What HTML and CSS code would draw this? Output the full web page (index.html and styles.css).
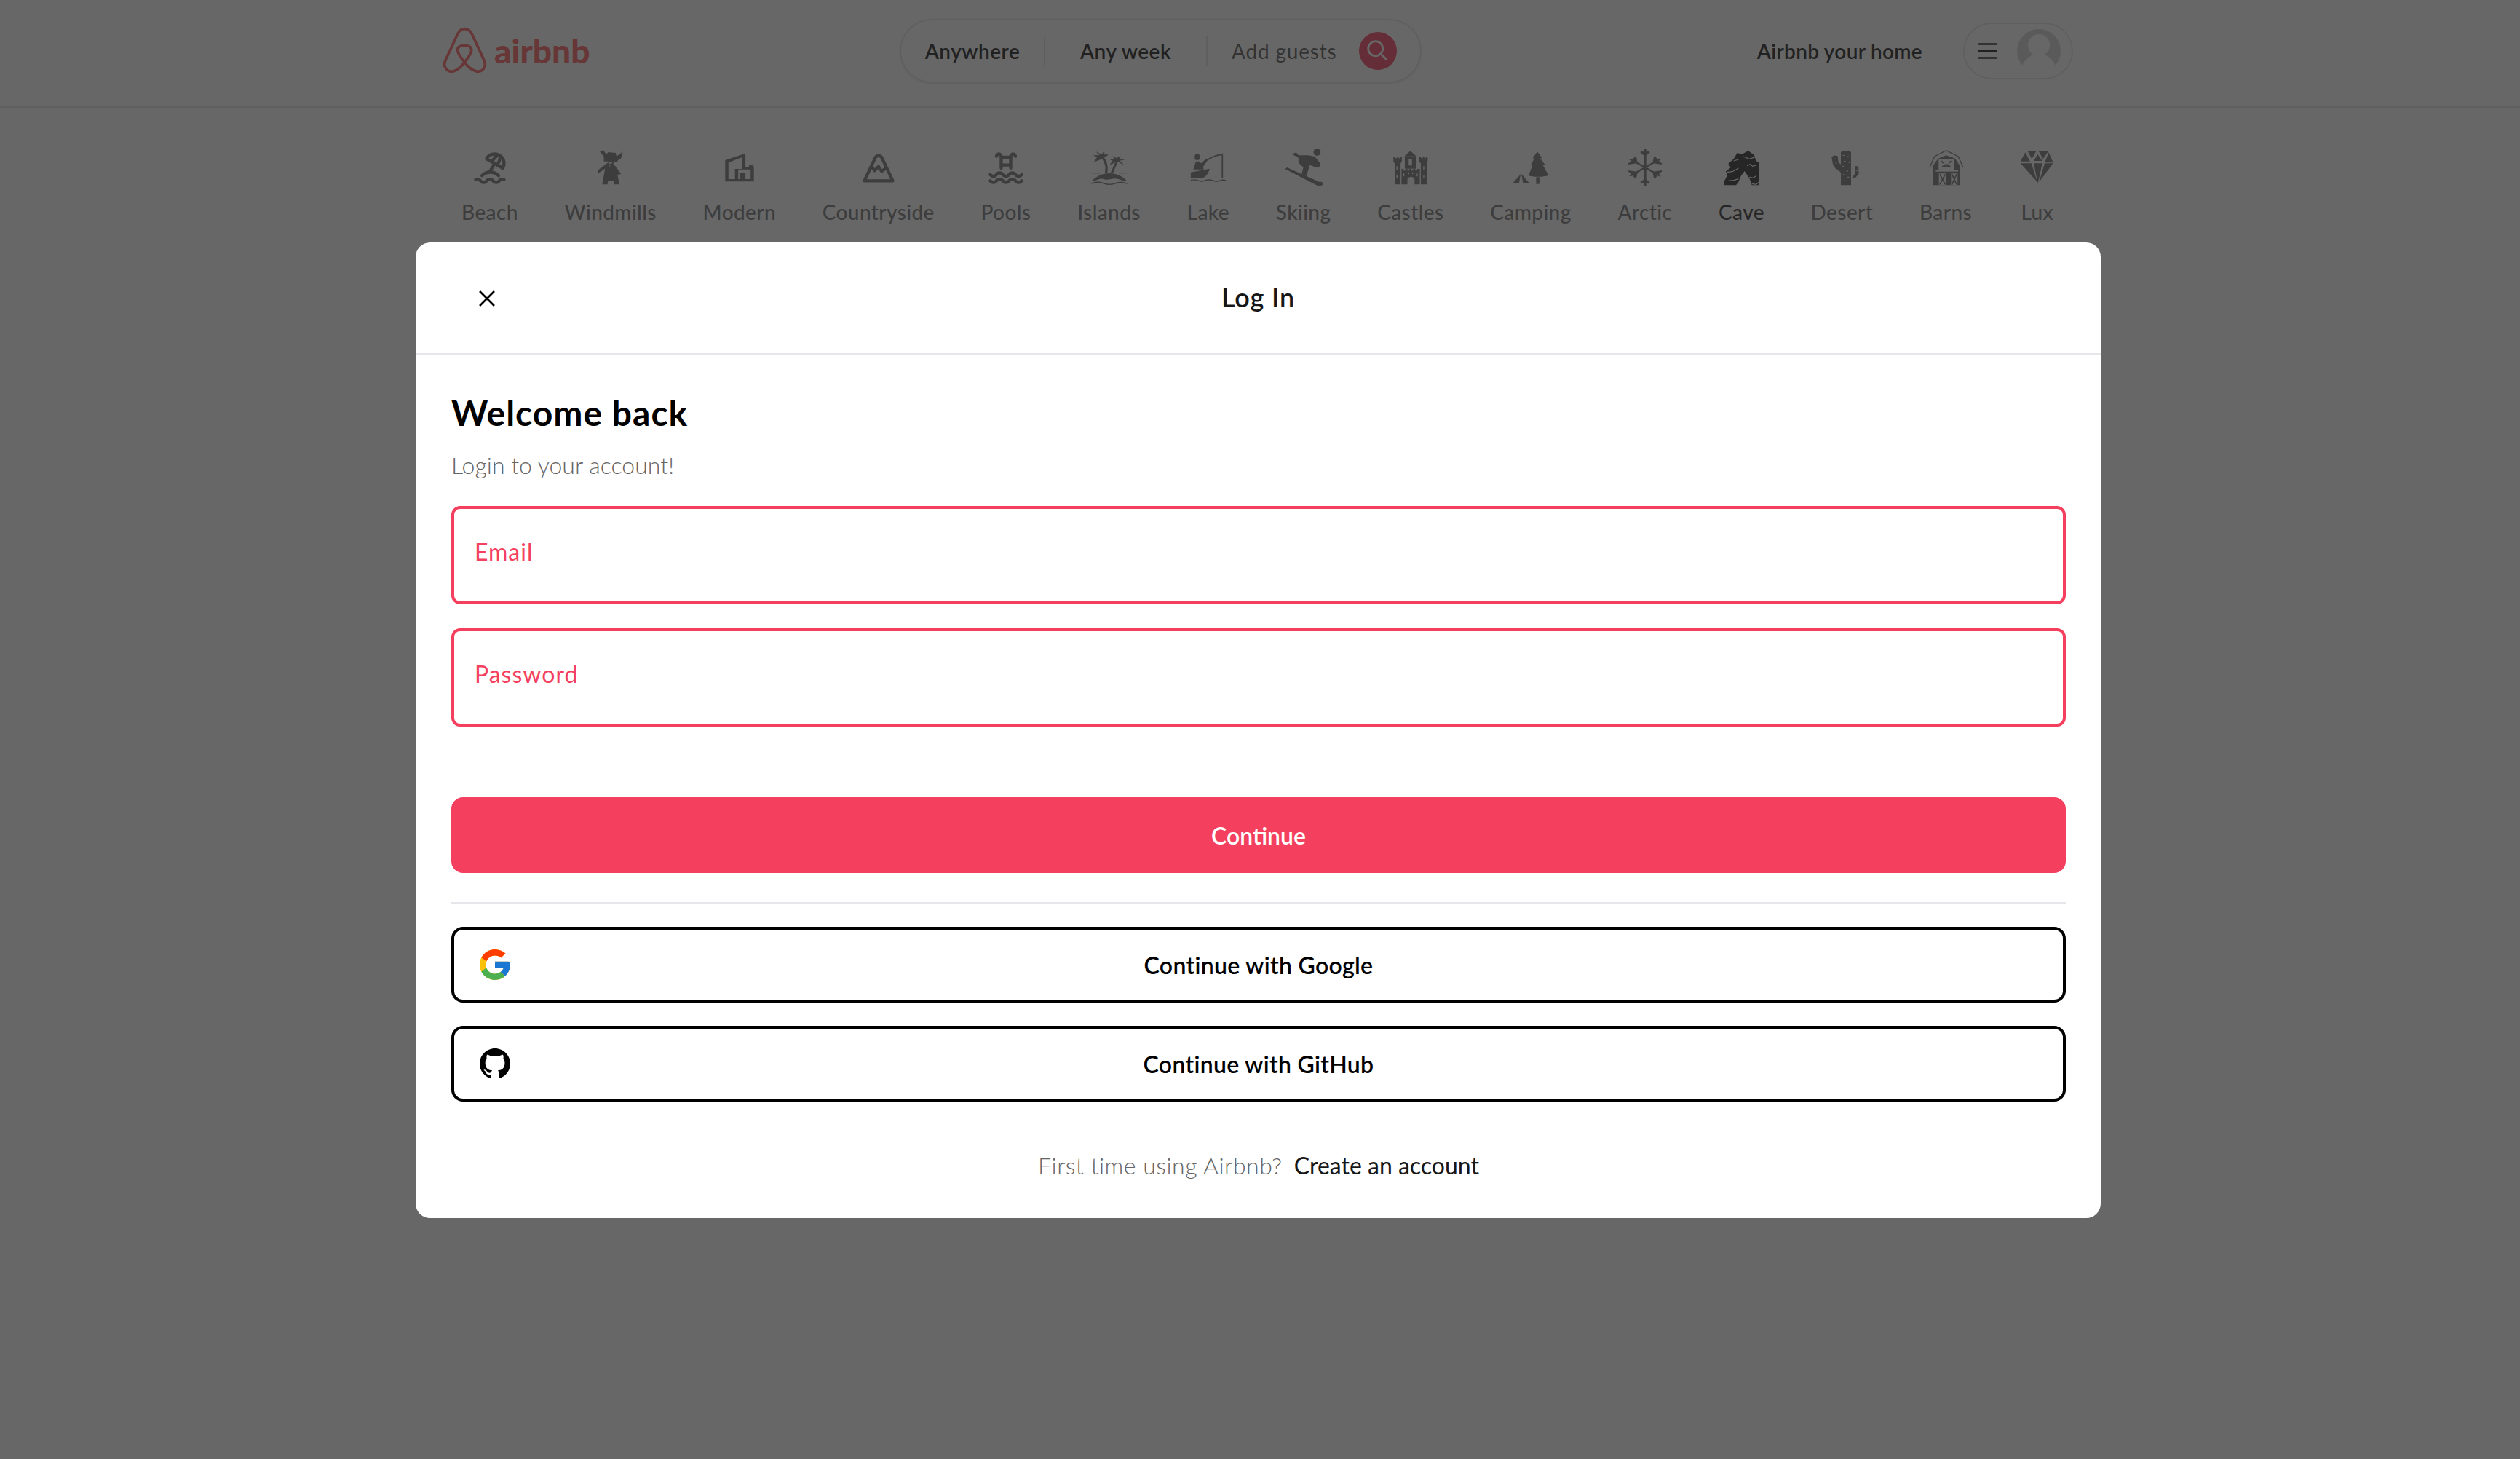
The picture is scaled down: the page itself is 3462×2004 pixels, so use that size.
FILE: index.html
```html
<!DOCTYPE html>
<html lang="en">
<head>
  <meta charset="UTF-8" />
  <meta name="viewport" content="width=device-width, initial-scale=1.0"/>
  <title>Airbnb</title>
  <link rel="stylesheet" href="styles.css">
</head>
<body>
  <header class="navbar">
    <div class="navbar-inner">
      <a class="logo">
        <svg class="logo-mark" viewBox="20 20 190 200" fill="none" stroke="#ff5a5f" stroke-width="11">
          <path d="M114 30C100 30 92 38 85 52L35 160C22 190 45 212 70 205C85 200 100 188 114 168C128 188 145 200 160 205C185 212 208 190 195 160L145 52C138 38 128 30 114 30Z"/>
          <path d="M114 168C95 145 85 128 85 118C85 105 98 98 114 98C130 98 143 105 143 118C143 128 133 145 114 168Z"/>
        </svg>
        <span class="logo-text">airbnb</span>
      </a>
      <div class="search">
        <span class="search-item search-first">Anywhere</span>
        <span class="search-item search-middle">Any week</span>
        <span class="search-item search-guests">Add guests</span>
        <span class="search-btn">
          <svg viewBox="0 0 52 52" fill="none" stroke="#fff" stroke-width="2.800"><circle cx="22.700" cy="22.700" r="10"/><path d="M30 30l8 8"/></svg>
        </span>
      </div>
      <div class="user-menu">
        <span class="host-link">Airbnb your home</span>
        <div class="menu-pill">
          <svg class="menu-icon" viewBox="0 0 26 22" stroke="#171717" stroke-width="2.600" stroke-linecap="round"><path d="M1 1.500h24M1 11h24M1 20.500h24"/></svg>
          <svg class="avatar" viewBox="0 0 60 60"><circle cx="30" cy="30" r="30" fill="#d4d4d4"/><circle cx="30" cy="22" r="15" fill="#fff"/><path d="M7 50C12 40 20 34 30 34S48 40 53 50V60H7z" fill="#fff"/></svg>
        </div>
      </div>
    </div>
  </header>

  <nav class="categories">
    <div class="category">
      <svg class="cat-icon stroke" viewBox="0 0 24 24"><path d="M17.553 16.75a7.5 7.5 0 0 0 -10.606 0"/><path d="M18 3.804a6 6 0 0 0 -8.196 2.196l10.392 6a6 6 0 0 0 -2.196 -8.196z"/><path d="M16.732 10c1.658 -2.87 2.225 -5.644 1.268 -6.196c-.957 -.552 -3.075 1.326 -4.732 4.196"/><path d="M15 9l-3 5.196"/><path d="M3 19.25a2.4 2.4 0 0 1 1 -.25a2.4 2.4 0 0 1 2 1a2.4 2.4 0 0 0 2 1a2.4 2.4 0 0 0 2 -1a2.4 2.4 0 0 1 2 -1a2.4 2.4 0 0 1 2 1a2.4 2.4 0 0 0 2 1a2.4 2.4 0 0 0 2 -1a2.4 2.4 0 0 1 2 -1a2.4 2.4 0 0 1 1 .25"/></svg>
      <span>Beach</span>
    </div>
    <div class="category">
      <svg class="cat-icon" viewBox="480 75 116 156" preserveAspectRatio="none"><path d="M522 145L512 220H528L530 205H546L548 220H565L553 145Z"/><path d="M517 125V110L530 87L553 90L560 125Z"/><path d="M505 85L515 78L541 127L533 133ZM575 85L570 112L544 135L536 125ZM500 160L498 176L536 140L530 130ZM570 176L558 181L532 135L542 128Z"/><circle cx="538" cy="131" r="4" fill="#fff"/></svg>
      <span>Windmills</span>
    </div>
    <div class="category">
      <svg class="cat-icon" viewBox="876 75 116 156" preserveAspectRatio="none"><path fill-rule="evenodd" d="M890 208V120L952 92V148H963V138H974L978 150V208ZM900 198H920V156H942V108L900 130ZM930 198H934V172H952V198H968V158H930Z"/></svg>
      <span>Modern</span>
    </div>
    <div class="category">
      <svg class="cat-icon stroke" viewBox="0 0 24 24"><path d="M3 20h18l-6.921 -14.612a2.3 2.3 0 0 0 -4.158 0l-6.921 14.612z"/><path d="M7.5 11l2 2.5l2.5 -2.5l2 3l2.5 -2"/></svg>
      <span>Countryside</span>
    </div>
    <div class="category">
      <svg class="cat-icon stroke" viewBox="0 0 24 24"><path d="M2 20a2.4 2.4 0 0 0 2 1a2.4 2.4 0 0 0 2 -1a2.4 2.4 0 0 1 2 -1a2.4 2.4 0 0 1 2 1a2.4 2.4 0 0 0 2 1a2.4 2.4 0 0 0 2 -1a2.4 2.4 0 0 1 2 -1a2.4 2.4 0 0 1 2 1a2.4 2.4 0 0 0 2 1a2.4 2.4 0 0 0 2 -1"/><path d="M2 16a2.4 2.4 0 0 0 2 1a2.4 2.4 0 0 0 2 -1a2.4 2.4 0 0 1 2 -1a2.4 2.4 0 0 1 2 1a2.4 2.4 0 0 0 2 1a2.4 2.4 0 0 0 2 -1a2.4 2.4 0 0 1 2 -1a2.4 2.4 0 0 1 2 1a2.4 2.4 0 0 0 2 1a2.4 2.4 0 0 0 2 -1"/><path d="M15 12v-7.5a1.5 1.5 0 0 1 3 0"/><path d="M9 12v-7.5a1.5 1.5 0 0 0 -3 0"/><path d="M15 5l-6 0"/><path d="M9 10l6 0"/></svg>
      <span>Pools</span>
    </div>
    <div class="category">
      <svg class="cat-icon" viewBox="442 75 116 156" preserveAspectRatio="none"><path d="M486 172C490 155 488 135 478 115L452 128L462 108L450 100L470 100L458 84L476 96L484 84L486 98L500 92L490 106L484 108C496 130 496 155 494 172Z"/><path d="M504 172C510 155 514 140 518 128L500 142L510 122L500 116L516 116L510 102L522 112L534 102L532 116L548 118L532 122L546 142L526 126C522 140 516 158 512 172Z"/><path d="M445 171H472V175H445ZM530 171H554V175H530Z"/><path d="M447 205C460 185 480 174 500 174C520 174 542 185 553 205C540 208 530 196 518 196C505 196 495 204 482 198C468 192 460 208 447 205Z"/><path d="M445 214C460 206 472 208 485 214C497 219 505 219 517 213C530 207 542 208 555 214V218C542 212 530 212 517 218C505 223 495 223 483 218C470 212 460 212 445 218Z"/></svg>
      <span>Islands</span>
    </div>
    <div class="category">
      <svg class="cat-icon" viewBox="748 75 116 156" preserveAspectRatio="none"><ellipse cx="772" cy="107" rx="8" ry="13"/><path d="M760 158L768 125H778L784 133L800 113L805 118L790 148L792 158Z"/><path d="M752 170L810 155C806 175 798 190 784 195H752Z"/><path d="M800 118C815 104 832 96 851 92V195H847V99C830 103 816 110 803 122Z"/><path d="M752 201C760 198 766 198 774 202C782 206 788 206 796 202C804 198 812 198 820 202C828 206 834 206 842 202C848 199 854 199 860 202V206C854 203 848 203 842 206C834 210 828 210 820 206C812 202 804 202 796 206C788 210 782 210 774 206C766 202 760 202 752 205Z"/></svg>
      <span>Lake</span>
    </div>
    <div class="category">
      <svg class="cat-icon" viewBox="1043 75 116 156" preserveAspectRatio="none"><ellipse cx="1142" cy="87" rx="11" ry="15"/><path d="M1065 95L1078 88L1085 100L1115 100L1135 105L1150 130L1153 145L1140 150L1120 140L1114 165L1110 187L1095 178L1100 150L1085 130L1085 110Z"/><path d="M1044 156L1050 150L1150 210C1158 208 1162 214 1158 222C1154 228 1146 227 1140 223Z"/></svg>
      <span>Skiing</span>
    </div>
    <div class="category">
      <svg class="cat-icon" viewBox="1376 75 116 156" preserveAspectRatio="none"><path fill-rule="evenodd" d="M1433 82L1452 104H1414ZM1416 108H1450V155H1416ZM1428 116V142H1438V116ZM1381 105H1387V112H1392V105H1397V112H1402V105H1407V124L1403 134V220H1385V134L1381 124ZM1460 105H1466V112H1471V105H1476V112H1481V105H1486V124L1483 134V220H1465V134L1460 124ZM1406 156H1412V163H1418V156H1424V163H1430V156H1436V163H1442V156H1448V163H1454V156H1462V220H1446V200C1446 185 1424 185 1424 200V220H1406Z"/><path d="M1392 145v14M1392 180v14M1474 145v14M1474 180v14M1413 175v12M1428 170v8M1440 170v8M1454 175v12" stroke="#fff" stroke-width="3"/></svg>
      <span>Castles</span>
    </div>
    <div class="category">
      <svg class="cat-icon" viewBox="148 75 95 156" preserveAspectRatio="none"><path d="M212 85L224 112H219L232 140H226L240 183C228 190 198 190 190 183L200 140H195L205 112H200Z"/><rect x="209" y="190" width="8" height="28"/><path d="M150 215L170 178L166 215ZM172 176L192 215H176Z"/></svg>
      <span>Camping</span>
    </div>
    <div class="category">
      <svg class="cat-icon" viewBox="432.500 75 95 156" preserveAspectRatio="none" fill="none" stroke="#737373" stroke-width="6"><path d="M480 75V225M442 115L518 185M518 115L442 185M470 85L480 100L490 85M470 215L480 200L490 215M438 135L458 130L455 105M505 105L502 130L522 135M438 165L458 170L455 195M505 195L502 170L522 165"/></svg>
      <span>Arctic</span>
    </div>
    <div class="category active">
      <svg class="cat-icon" viewBox="83 30 156 156"><path d="M90 178V165L105 135L97 122L118 105L108 90L130 70L145 45L165 50L190 36L215 55L222 78L235 85V178H205L195 150L175 120L160 140L150 165L140 178Z"/><path d="M170 60L195 70L218 62M185 98L198 92L208 100L225 95M100 125L125 122L150 108M108 160L130 158L150 152M195 145L210 148L222 140M205 172L222 175L235 165M130 78L150 72" fill="none" stroke="#fff" stroke-width="3.500"/></svg>
      <span>Cave</span>
    </div>
    <div class="category">
      <svg class="cat-icon" viewBox="493 30 156 156"><path d="M568 178V125L545 108L535 92L530 62L540 55L555 58L558 85L568 92V42L578 35L585 40L600 35L610 42V178ZM612 150L625 132L628 100L640 100L642 132L625 150Z"/><path d="M575 55h8M595 60h6M580 80h8M600 85h6M572 100h8M590 120h8M575 135h8M595 145h8M580 160h6M542 70h6M545 88h6M630 118h6" fill="none" stroke="#fff" stroke-width="3"/></svg>
      <span>Desert</span>
    </div>
    <div class="category">
      <svg class="cat-icon" viewBox="78 30 156 156"><path d="M90 105L110 60L158 35L208 60L228 105" fill="none" stroke="#737373" stroke-width="4"/><path d="M102 178V100L125 68L158 55L195 68L215 100V178Z"/><rect x="127" y="72" width="62" height="43" fill="#fff"/><path d="M138 78L146 88M178 78L170 88M145 100C155 92 165 92 172 100L145 100Z" stroke="#737373" stroke-width="5" fill="none"/><rect x="115" y="117" width="92" height="5" fill="#fff"/><path d="M128 130H158V178H128ZM178 130H205V178H178Z" fill="#fff"/><path d="M132 133L154 175M154 133L132 175M182 133L201 175M201 133L182 175" stroke="#737373" stroke-width="5"/></svg>
      <span>Barns</span>
    </div>
    <div class="category">
      <svg class="cat-icon" viewBox="457 30 156 156"><path d="M495 38H530L512 70ZM540 38H580L558 70ZM536 50L555 78H520ZM485 43L505 80H465ZM582 43L600 85H565ZM465 88H510L535 165ZM520 88H555L537 172ZM565 88H600L542 165Z"/></svg>
      <span>Lux</span>
    </div>
  </nav>

  <div class="overlay">
    <div class="modal">
      <div class="modal-head">
        <svg class="modal-close" viewBox="0 0 22 22" fill="none" stroke="#000" stroke-width="2.600"><path d="M1 1l20 20M21 1L1 21"/></svg>
        <div class="modal-title">Log In</div>
      </div>
      <div class="modal-body">
        <h1>Welcome back</h1>
        <p class="subtitle">Login to your account!</p>
        <div class="field"><label>Email</label></div>
        <div class="field"><label>Password</label></div>
      </div>
      <div class="modal-foot">
        <button class="btn-primary">Continue</button>
        <hr class="divider">
        <button class="btn-outline">
          <svg class="btn-icon" viewBox="4 4 40 40"><path fill="#ffc107" d="M43.6 20.100H42V20H24v8h11.300C33.700 32.700 29.200 36 24 36c-6.600 0-12-5.400-12-12s5.400-12 12-12c3.100 0 5.800 1.200 8 3l5.700-5.700C34 6.100 29.300 4 24 4 13 4 4 13 4 24s9 20 20 20 20-9 20-20c0-1.300-.1-2.700-.4-3.900z"/><path fill="#ff3d00" d="M6.300 14.700l6.600 4.800C14.700 15.100 19 12 24 12c3.100 0 5.800 1.200 8 3l5.700-5.700C34 6.100 29.300 4 24 4 16.300 4 9.700 8.300 6.300 14.700z"/><path fill="#4caf50" d="M24 44c5.200 0 9.900-2 13.400-5.200l-6.200-5.200C29.200 35.100 26.700 36 24 36c-5.200 0-9.600-3.300-11.300-7.900l-6.500 5C9.500 39.600 16.200 44 24 44z"/><path fill="#1976d2" d="M43.600 20.100H42V20H24v8h11.300c-.8 2.200-2.200 4.200-4.100 5.600l6.200 5.200C37 39.200 44 34 44 24c0-1.300-.1-2.700-.4-3.900z"/></svg>
          Continue with Google
        </button>
        <button class="btn-outline">
          <svg class="btn-icon" viewBox="0 0 16 16"><path d="M8 0C3.580 0 0 3.580 0 8c0 3.540 2.290 6.530 5.470 7.590.4.070.55-.17.55-.38 0-.19-.01-.82-.01-1.490-2.010.37-2.530-.49-2.690-.94-.09-.23-.48-.94-.82-1.130-.28-.15-.68-.52-.01-.53.630-.01 1.080.58 1.230.82.720 1.210 1.870.87 2.330.66.070-.52.280-.87.510-1.070-1.780-.2-3.640-.89-3.640-3.950 0-.87.310-1.590.820-2.150-.08-.2-.36-1.020.08-2.120 0 0 .67-.21 2.200.82.640-.18 1.320-.27 2-.27.680 0 1.360.09 2 .27 1.530-1.040 2.200-.82 2.200-.82.440 1.100.160 1.920.080 2.120.510.560.820 1.270.820 2.150 0 3.070-1.870 3.750-3.650 3.950.290.250.540.730.540 1.480 0 1.070-.01 1.930-.01 2.200 0 .210.150.460.550.380A8.013 8.013 0 0 0 16 8c0-4.420-3.580-8-8-8z"/></svg>
          Continue with GitHub
        </button>
        <p class="signup"><span>First time using Airbnb?</span><a>Create an account</a></p>
      </div>
    </div>
  </div>
</body>
</html>
```

FILE: styles.css
```css
* {
  box-sizing: border-box;
}
html, body {
  height: 100%;
}
body {
  margin: 0;
  background: white;
  color: #171717;
  font-family: "Lato", sans-serif;
  overflow: hidden;
}

/* navbar */
.navbar {
  height: 148px;
  border-bottom: 2px solid #e5e5e5;
}
.navbar-inner {
  height: 139px;
  padding: 0 614px 0 607px;
  display: flex;
  align-items: center;
}
.logo {
  display: flex;
  align-items: center;
  gap: 9px;
  width: 629px;
}
.logo-mark {
  width: 63px;
  height: 67px;
}
.logo-text {
  color: #ff5a5f;
  font-size: 46px;
  font-weight: 900;
  line-height: 1;
}
.search {
  display: flex;
  align-items: center;
  width: 717px;
  height: 88px;
  border: 2px solid #e5e5e5;
  border-radius: 44px;
  box-shadow: 0 1px 3px rgba(0,0,0,0.1);
  font-size: 28px;
  font-weight: 600;
  letter-spacing: 0.5px;
}
.search-item {
  line-height: 40px;
  white-space: nowrap;
  text-align: center;
}
.search-first {
  width: 196px;
}
.search-middle {
  width: 225px;
  border-left: 2px solid #e5e5e5;
  border-right: 2px solid #e5e5e5;
}
.search-guests {
  flex: 1;
  padding-left: 33px;
  text-align: left;
  color: #525252;
  font-weight: 400;
  letter-spacing: 0.8px;
}
.search-btn {
  width: 52px;
  height: 52px;
  margin-right: 32px;
  border-radius: 50%;
  background: #f43f5e;
  display: flex;
}
.user-menu {
  margin-left: auto;
  display: flex;
  align-items: center;
  gap: 56px;
}
.host-link {
  font-size: 28px;
  font-weight: 600;
  letter-spacing: 0.3px;
  white-space: nowrap;
}
.menu-pill {
  width: 151px;
  height: 78px;
  border: 2px solid #e5e5e5;
  border-radius: 39px;
  display: flex;
  align-items: center;
  justify-content: space-between;
  padding: 0 15px 0 19px;
}
.menu-icon {
  width: 26px;
  height: 22px;
}
.avatar {
  width: 60px;
  height: 60px;
}

/* categories */
.categories {
  display: flex;
  gap: 63.7px;
  padding: 57px 0 0 634px;
}
.category {
  display: flex;
  flex-direction: column;
  align-items: center;
  gap: 15px;
  font-size: 28px;
  font-weight: 500;
  letter-spacing: 0.4px;
  color: #737373;
  line-height: 38px;
}
.category.active {
  color: #262626;
}
.cat-icon {
  width: 52px;
  height: 52px;
  fill: currentColor;
  display: block;
}
.cat-icon.stroke {
  fill: none;
  stroke: currentColor;
  stroke-width: 2;
  stroke-linecap: round;
  stroke-linejoin: round;
}

/* modal */
.overlay {
  position: fixed;
  inset: 0;
  background: rgba(38,38,38,0.7);
  display: flex;
  justify-content: center;
  align-items: flex-start;
  padding: 333px 5px 0 0;
}
.modal {
  width: 2315px;
  height: 1340px;
  background: white;
  border-radius: 20px;
  display: flex;
  flex-direction: column;
}
.modal-head {
  position: relative;
  height: 154px;
  padding-bottom: 2px;
  border-bottom: 2px solid #e5e7eb;
  display: flex;
  align-items: center;
  justify-content: center;
}
.modal-close {
  position: absolute;
  left: 87px;
  top: 66px;
  width: 22px;
  height: 22px;
}
.modal-title {
  font-size: 36px;
  font-weight: 600;
  letter-spacing: 0.8px;
}
.modal-body {
  padding: 48px 48px 0 49px;
}
h1 {
  margin: 0;
  font-size: 48px;
  font-weight: 700;
  letter-spacing: 1px;
  line-height: 64px;
  color: #000;
}
.subtitle {
  margin: 16px 0 0;
  font-size: 32px;
  font-weight: 300;
  line-height: 48px;
  color: #666;
}
.field {
  height: 135px;
  margin-top: 33px;
  padding: 37px 28px 0;
  border: 4px solid #f43f5e;
  border-radius: 12px;
}
.subtitle + .field {
  margin-top: 32px;
}
label {
  display: block;
  font-size: 32px;
  letter-spacing: 1px;
  line-height: 44px;
  color: #f43f5e;
}
.modal-foot {
  padding: 97px 48px 0 49px;
  display: flex;
  flex-direction: column;
}
.btn-primary {
  height: 104px;
  border: none;
  border-radius: 16px;
  background: #f43f5e;
  color: white;
  font: 600 32px "Lato", sans-serif;
}
.divider {
  width: 100%;
  margin: 40px 0 32px;
  border: none;
  border-top: 2px solid #e5e7eb;
}
.btn-outline {
  position: relative;
  height: 104px;
  margin-bottom: 32px;
  border: 4px solid #000;
  border-radius: 16px;
  background: white;
  color: #000;
  font: 600 32px "Lato", sans-serif;
  letter-spacing: 0.3px;
}
.btn-icon {
  position: absolute;
  left: 35px;
  top: 27px;
  width: 42px;
  height: 42px;
}
.signup {
  margin: 32px 0 0;
  text-align: center;
  font-size: 32px;
  font-weight: 300;
  line-height: 48px;
  color: #666;
}
.signup span {
  letter-spacing: 0.5px;
}
.signup a {
  margin-left: 16px;
  color: #171717;
  font-weight: 400;
}
```
